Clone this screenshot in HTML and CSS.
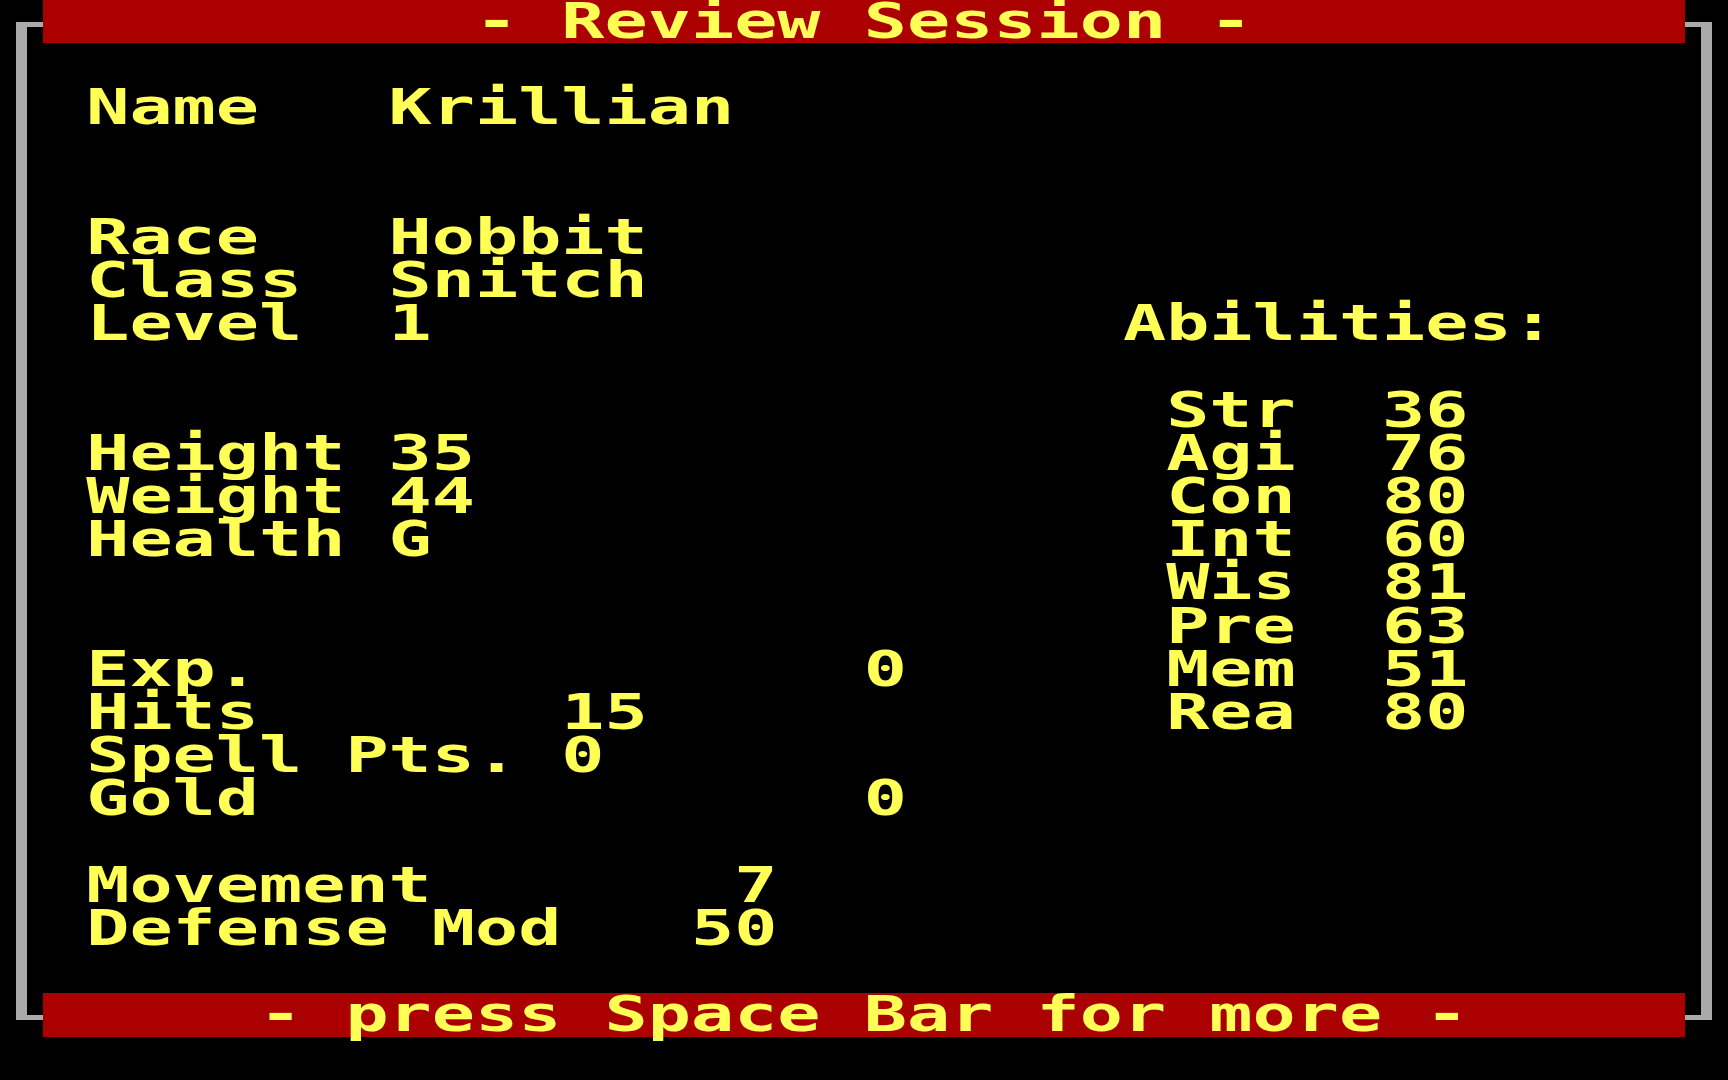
FILE: index.html
```html
<!DOCTYPE html>
<html lang="en">
<head>
    <meta charset="UTF-8">
    <meta name="viewport" content="width=device-width, initial-scale=1.0">
    <title>Review Session</title>
    <link rel="stylesheet" href="styles.css">
</head>
<body>
    <div class="screen">
        <div class="frame">
            <div class="bar top"><span class="cap">          - Review Session -</span></div>

            <!-- 22 text rows, 38 columns each, laid out like the text buffer -->
            <div class="sheet">
                <div class="ln"></div>
                <div class="ln"> Name   Krillian</div>
                <div class="ln"></div>
                <div class="ln"></div>
                <div class="ln"> Race   Hobbit</div>
                <div class="ln"> Class  Snitch</div>
                <div class="ln"> Level  1                Abilities:</div>
                <div class="ln"></div>
                <div class="ln">                          Str  36</div>
                <div class="ln"> Height 35                Agi  76</div>
                <div class="ln"> Weight 44                Con  80</div>
                <div class="ln"> Health G                 Int  60</div>
                <div class="ln">                          Wis  81</div>
                <div class="ln">                          Pre  63</div>
                <div class="ln"> Exp.              0      Mem  51</div>
                <div class="ln"> Hits       15            Rea  80</div>
                <div class="ln"> Spell Pts. 0</div>
                <div class="ln"> Gold              0</div>
                <div class="ln"></div>
                <div class="ln"> Movement       7</div>
                <div class="ln"> Defense Mod   50</div>
                <div class="ln"></div>
            </div>

            <div class="bar bottom"><span class="cap">     - press Space Bar for more -</span></div>
        </div>
    </div>
</body>
</html>
```

FILE: styles.css
```css
* {
    margin: 0;
    padding: 0;
    box-sizing: border-box;
}

body {
    background: #000;
}

/* 40 x 25 text screen, every cell 43.2px square */
.screen {
    width: 1728px;
    height: 1080px;
    overflow: hidden;
    background: #000;
    color: #ffff55;
    font-family: "DejaVu Sans Mono", "Liberation Mono", monospace;
    font-weight: bold;
    font-size: 50px;
    line-height: 43.2px;
}

/* single line box drawn through the middle of the outer cells */
.frame {
    margin: 22px 0 0 16px;
    width: 1696px;
    border: 5px solid #aaaaaa;
    border-left-width: 11px;
    border-right-width: 11px;
}

.bar {
    height: 43.2px;
    background: #aa0000;
    white-space: pre;
}

.bar.top {
    margin: -27px 16px 0;
}

.bar.bottom {
    margin: 0 16px -21.8px;
}

/* glyphs are stretched so one character fills one cell */
.cap {
    display: inline-block;
    transform: scaleX(1.435);
    transform-origin: 0 0;
}

.sheet {
    margin-left: 16.2px;
    transform: scaleX(1.435);
    transform-origin: 0 0;
}

.ln {
    height: 43.2px;
    white-space: pre;
}
```
